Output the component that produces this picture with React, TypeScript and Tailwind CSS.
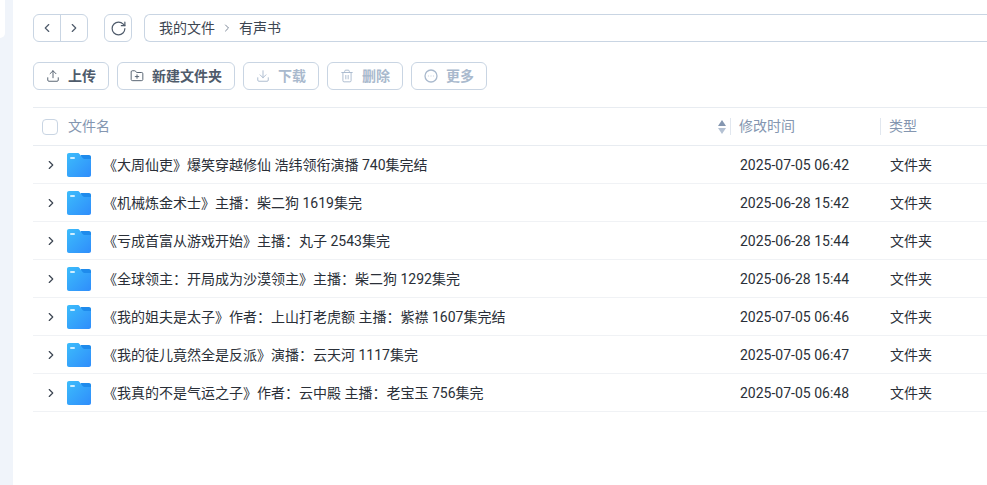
import type { ReactNode } from "react";
import { ChevronLeft, ChevronRight, RotateCw, Upload, FolderPlus, Download, Trash2 } from "lucide-react";

const files = [
    { name: "《大周仙吏》爆笑穿越修仙 浩纬领衔演播 740集完结", time: "2025-07-05 06:42" },
    { name: "《机械炼金术士》主播：柴二狗 1619集完", time: "2025-06-28 15:42" },
    { name: "《亏成首富从游戏开始》主播：丸子 2543集完", time: "2025-06-28 15:44" },
    { name: "《全球领主：开局成为沙漠领主》主播：柴二狗 1292集完", time: "2025-06-28 15:44" },
    { name: "《我的姐夫是太子》作者：上山打老虎额 主播：紫襟 1607集完结", time: "2025-07-05 06:46" },
    { name: "《我的徒儿竟然全是反派》演播：云天河 1117集完", time: "2025-07-05 06:47" },
    { name: "《我真的不是气运之子》作者：云中殿 主播：老宝玉 756集完", time: "2025-07-05 06:48" },
];

function FolderIcon() {
    return (
        <svg width="26" height="26" viewBox="0 0 26 26" className="shrink-0">
            <defs>
                <linearGradient id="folderFill" x1="0" y1="0" x2="1" y2="1">
                    <stop offset="0" stopColor="#3cbcfb" />
                    <stop offset="1" stopColor="#2f8dfb" />
                </linearGradient>
            </defs>
            <path d="M3 1h8.5c1 0 1.6.4 2.2 1.2L15 4h8c1.2 0 2 .8 2 2v17c0 1.2-.8 2-2 2H3c-1.2 0-2-.8-2-2V3c0-1.2.8-2 2-2z" fill="url(#folderFill)" />
            <path d="M14.5 3h8.5c1.2 0 2 .8 2 2v2H19c-1.4 0-2.2-.6-3-1.8z" fill="#1f8bec" />
            <rect x="4" y="5" width="5" height="2" rx="1" fill="#cfeeff" />
        </svg>
    );
}

function MoreIcon() {
    return (
        <svg width="14" height="14" viewBox="0 0 14 14" fill="none" stroke="currentColor" strokeWidth="1.3">
            <circle cx="7" cy="7" r="6" />
            <path d="M4.5 7h.01M7 7h.01M9.5 7h.01" strokeOpacity="0.5" strokeLinecap="round" />
        </svg>
    );
}

function ActionButton({ icon, label, disabled }: { icon: ReactNode; label: string; disabled?: boolean }) {
    return (
        <button
            type="button"
            className={`flex h-7 items-center gap-2 rounded-md border border-[#c9d5e3] bg-white px-3 text-sm font-bold ${
                disabled ? "text-[#a9b9cd]" : "text-[#4f5b6b]"
            }`}
        >
            {icon}
            {label}
        </button>
    );
}

export default function App() {
    return (
        <div className="flex h-[485px] w-[987px] overflow-hidden bg-white font-['Roboto','Noto_Sans_CJK_SC',sans-serif] text-sm text-[#2a2f38]">
            <aside className="h-full w-[13px] shrink-0 bg-[#f0f4fa]">
                <div className="h-[38px] w-[5px] rounded-br-md bg-white" />
            </aside>

            <main className="flex min-w-0 flex-1 flex-col pl-5 pt-3.5">
                <div className="flex h-7 items-stretch gap-4">
                    <div className="flex w-[55px] rounded-md border border-[#c9d5e3] text-[#4f5b6b]">
                        <span className="flex flex-1 items-center justify-center border-r border-[#c9d5e3]">
                            <ChevronLeft size={14} strokeWidth={2} />
                        </span>
                        <span className="flex flex-1 items-center justify-center">
                            <ChevronRight size={14} strokeWidth={2} />
                        </span>
                    </div>
                    <div className="flex w-7 items-center justify-center rounded-md border border-[#c9d5e3] text-[#4f5b6b]">
                        <RotateCw size={17} strokeWidth={1.7} />
                    </div>
                    <div className="-ml-1 flex flex-1 items-center rounded-l-md border-y border-l border-[#c9d5e3] pl-3.5 text-[#3d4652]">
                        我的文件
                        <ChevronRight size={12} className="mx-[6px] text-[#7c8797]" />
                        有声书
                    </div>
                </div>

                <div className="mt-5 flex gap-2">
                    <ActionButton icon={<Upload size={14} strokeWidth={1.6} />} label="上传" />
                    <ActionButton icon={<FolderPlus size={14} strokeWidth={1.6} />} label="新建文件夹" />
                    <ActionButton disabled icon={<Download size={14} strokeWidth={1.6} />} label="下载" />
                    <ActionButton disabled icon={<Trash2 size={14} strokeWidth={1.6} />} label="删除" />
                    <ActionButton disabled icon={<MoreIcon />} label="更多" />
                </div>

                <div className="mt-[17px] border-t border-[#e8ecf1]">
                    <div className="flex h-[38px] items-center border-b border-[#e8ecf1] text-[#8496b0]">
                        <div className="flex flex-1 items-center pl-[9px]">
                            <span className="h-4 w-4 rounded border border-[#c9d5e3]" />
                            <span className="ml-[10px] flex-1 pb-px">文件名</span>
                            <span className="mr-1 flex flex-col gap-[2px]">
                                <span className="h-0 w-0 border-x-[4px] border-b-[6px] border-x-transparent border-b-[#8496b0]" />
                                <span className="h-0 w-0 border-x-[4px] border-t-[6px] border-x-transparent border-t-[#b4c1d3]" />
                            </span>
                        </div>
                        <div className="w-[150px] border-l border-[#e1e7ef] pl-2 leading-[17px]">修改时间</div>
                        <div className="w-[107px] border-l border-[#e1e7ef] pl-2 leading-[17px]">类型</div>
                    </div>
                    {files.map((file) => (
                        <div key={file.name} className="flex h-[38px] items-center border-b border-[#f0f2f5]">
                            <div className="flex min-w-0 flex-1 items-center pl-[11px]">
                                <ChevronRight size={14} strokeWidth={2} className="mr-2 shrink-0 text-[#3d4652]" />
                                <FolderIcon />
                                <span className="ml-[11px] truncate pt-px">{file.name}</span>
                            </div>
                            <div className="w-[150px] pl-[10px] pt-px">{file.time}</div>
                            <div className="w-[107px] pl-[10px] pt-px">文件夹</div>
                        </div>
                    ))}
                </div>
            </main>
        </div>
    );
}
